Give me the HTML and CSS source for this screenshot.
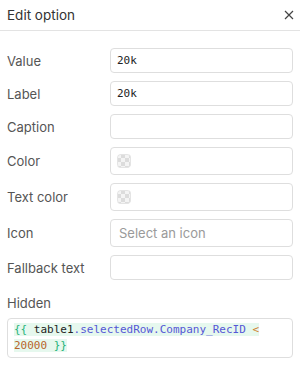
FILE: index.html
```html
<!DOCTYPE html>
<html lang="en">

<head>
	<meta charset="UTF-8" />
	<meta name="viewport" content="width=device-width, initial-scale=1.0" />
	<title>Edit option</title>
	<link rel="stylesheet" href="styles.css">
</head>

<body>
	<div class="panel">
		<!-- header -->
		<div class="panel-head">
			<div class="panel-title">Edit option</div>
			<span class="close">
				<svg width="10" height="10" viewBox="0 0 10 10">
					<path d="M1 1L9 9M9 1L1 9" stroke="#444" stroke-width="1.2" fill="none" />
				</svg>
			</span>
		</div>

		<!-- fields -->
		<div class="fields">
			<label class="field-label">Value</label>
			<div class="input mono">20k</div>

			<label class="field-label">Label</label>
			<div class="input mono">20k</div>

			<label class="field-label">Caption</label>
			<div class="input"></div>

			<label class="field-label">Color</label>
			<div class="input tall"><span class="swatch"></span></div>

			<label class="field-label">Text color</label>
			<div class="input tall"><span class="swatch"></span></div>

			<label class="field-label">Icon</label>
			<div class="input tall placeholder">Select an icon</div>

			<label class="field-label">Fallback text</label>
			<div class="input"></div>
		</div>

		<div class="block">
			<div class="field-label">Hidden</div>
			<div class="code-box">
				<span class="hl"><span class="c-brace">{{</span> table1<span class="c-prop">.selectedRow.Company_RecID</span> <span class="c-op">&lt;</span> </span><br><span class="hl"><span class="c-num">20000</span> <span class="c-brace">}}</span></span>
			</div>
		</div>
	</div>
</body>

</html>
```

FILE: styles.css
```css
body {
	margin: 0;
	background: #fff;
	font-family: Inter, "Noto Sans", sans-serif;
	color: #333;
}

.panel {
	width: 300px;
}

.panel-head {
	display: flex;
	align-items: center;
	justify-content: space-between;
	height: 30px;
	padding: 0 7px;
	border-bottom: 1px solid #e3e3e3;
}

.panel-title {
	font-size: 13.5px;
	color: #333;
}

.close {
	display: flex;
	margin-right: -1px;
}

.fields {
	display: grid;
	grid-template-columns: 103px 1fr;
	row-gap: 8px;
	align-items: center;
	padding: 17px 7px 0;
}

.field-label {
	font-size: 13px;
	color: #555;
}

.input {
	display: flex;
	align-items: center;
	box-sizing: border-box;
	height: 25px;
	padding: 0 6px;
	border: 1px solid #dedede;
	border-radius: 4px;
	font-size: 13px;
}

.input.tall {
	height: 28px;
}

.mono {
	font-family: "DejaVu Sans Mono", monospace;
	font-size: 11px;
	color: #222;
}

.placeholder {
	padding-left: 8px;
	color: #9a9a9a;
}

.swatch {
	width: 14px;
	height: 14px;
	border-radius: 4px;
	background-color: #f4f4f4;
	background-image:
		linear-gradient(45deg, #dcdcdc 25%, transparent 25%, transparent 75%, #dcdcdc 75%),
		linear-gradient(45deg, #dcdcdc 25%, transparent 25%, transparent 75%, #dcdcdc 75%);
	background-size: 8px 8px;
	background-position: 0 0, 4px 4px;
	box-shadow: inset 0 0 0 1px #e4e4e4;
}

.block {
	padding: 15px 7px 0;
}

.block .field-label {
	margin-bottom: 7px;
}

.code-box {
	box-sizing: border-box;
	height: 40px;
	padding: 3px 6px;
	border: 1px solid #dedede;
	border-radius: 4px;
	font-family: "DejaVu Sans Mono", monospace;
	font-size: 11px;
	line-height: 16px;
	color: #222;
}

.hl {
	background: #e6f8ee;
}

.c-brace {
	color: #27b37a;
}

.c-prop {
	color: #5557d6;
}

.c-op {
	color: #d0802f;
}

.c-num {
	color: #b8652a;
}
```
